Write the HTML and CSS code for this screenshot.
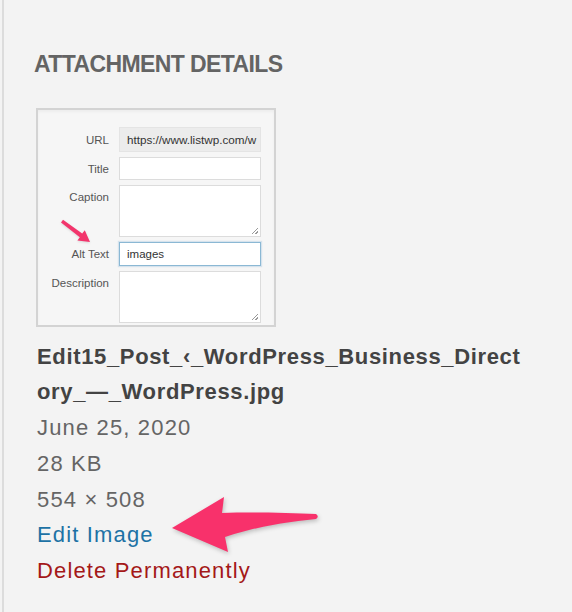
FILE: index.html
```html
<!DOCTYPE html>
<html lang="en">
<head>
<meta charset="utf-8">
<title>Attachment Details</title>
<link rel="stylesheet" href="styles.css">
</head>
<body>
<div class="panel">
  <h2 class="title">ATTACHMENT DETAILS</h2>
  <div class="thumb">
    <div class="form">
      <div class="lbl lbl-url">URL</div>
      <div class="field field-url">https://www.listwp.com/w</div>
      <div class="lbl">Title</div>
      <div class="field"></div>
      <div class="lbl">Caption</div>
      <div class="field area"></div>
      <div class="lbl">Alt Text</div>
      <div class="field field-focus">images</div>
      <div class="lbl">Description</div>
      <div class="field area"></div>
    </div>
    <svg class="mini-arrow" width="36" height="30" viewBox="0 0 36 30">
      <path d="M3,7.4 L5,4.8 L24.2,18.4 L26.8,15.2 L32,27 L19.4,25.4 L21.8,22.2 Z" fill="#f2356c"/>
    </svg>
  </div>
  <div class="filename">Edit15_Post_‹_WordPress_Business_Directory_—_WordPress.jpg</div>
  <div class="meta">June 25, 2020</div>
  <div class="meta">28 KB</div>
  <div class="meta">554 × 508</div>
  <a class="meta link-edit">Edit Image</a>
  <a class="meta link-delete">Delete Permanently</a>
  <svg class="big-arrow" width="165" height="72" viewBox="0 0 165 72">
    <path d="M12,38 L64,7 L62,23 C95,22 130,23 156,24 Q159.5,26.5 156,29 C125,32 95,37 65,47 L68,62 Z" fill="#f8316b"/>
  </svg>
</div>
</body>
</html>
```
FILE: styles.css
```css
html, body {
  margin: 0;
  padding: 0;
  background: #f3f3f3;
}

.panel {
  position: relative;
  box-sizing: border-box;
  min-height: 612px;
  margin-left: 2px;
  border-left: 2px solid #dcdcdc;
  padding: 49px 0 0 33px;
  font-family: "Liberation Sans", Arial, sans-serif;
}

.title {
  margin: 0 0 29px -3px;
  font-size: 23px;
  line-height: 30px;
  font-weight: 700;
  letter-spacing: -0.6px;
  color: #646464;
}

.thumb {
  position: relative;
  box-sizing: border-box;
  width: 240px;
  height: 219px;
  margin-left: -1px;
  border: 2px solid #d3d3d3;
  background: #f6f6f6;
  box-shadow: inset 0 2px 3px rgba(0, 0, 0, 0.04);
  overflow: hidden;
}

.form {
  display: grid;
  grid-template-columns: 61px 142px;
  grid-template-rows: 25px 23px 52px 24px 52px;
  column-gap: 10px;
  row-gap: 5px;
  padding: 17px 0 0 10px;
}

.lbl {
  padding-top: 6px;
  font-size: 11.5px;
  line-height: 13px;
  text-align: right;
  color: #555;
}

.lbl-url {
  padding-top: 7px;
}

.field {
  position: relative;
  box-sizing: border-box;
  border: 1px solid #dcdcdc;
  background: #fff;
  padding: 0 0 0 7px;
  font-size: 11.5px;
  line-height: 22px;
  color: #333;
  white-space: nowrap;
  overflow: hidden;
}

.field-url {
  background: #ececec;
  border-color: #e4e4e4;
  line-height: 23px;
  font-size: 11.7px;
}

.field-focus {
  border-color: #8bb8d4;
  box-shadow: 0 0 1px 1px rgba(120, 170, 210, 0.25);
}

.area::after {
  content: "";
  position: absolute;
  right: 2px;
  bottom: 2px;
  width: 6px;
  height: 6px;
  background: linear-gradient(135deg,
    transparent 44%, #9a9a9a 44%, #9a9a9a 54%, transparent 54%,
    transparent 74%, #9a9a9a 74%, #9a9a9a 86%, transparent 86%);
}

.mini-arrow {
  position: absolute;
  left: 20px;
  top: 105px;
  filter: drop-shadow(0 1px 1px rgba(0, 0, 0, 0.12));
}

.filename {
  width: 492px;
  margin-top: 11.5px;
  font-size: 22px;
  line-height: 35.75px;
  font-weight: 700;
  letter-spacing: 0.65px;
  color: #434343;
  word-break: break-all;
}

.meta {
  display: block;
  font-size: 22px;
  line-height: 35.75px;
  letter-spacing: 1.15px;
  color: #656565;
}

.link-edit {
  color: #1d72a5;
}

.link-delete {
  color: #a41818;
}

.big-arrow {
  position: absolute;
  left: 156px;
  top: 490px;
  filter: drop-shadow(1px 2px 2px rgba(0, 0, 0, 0.22));
}
```
